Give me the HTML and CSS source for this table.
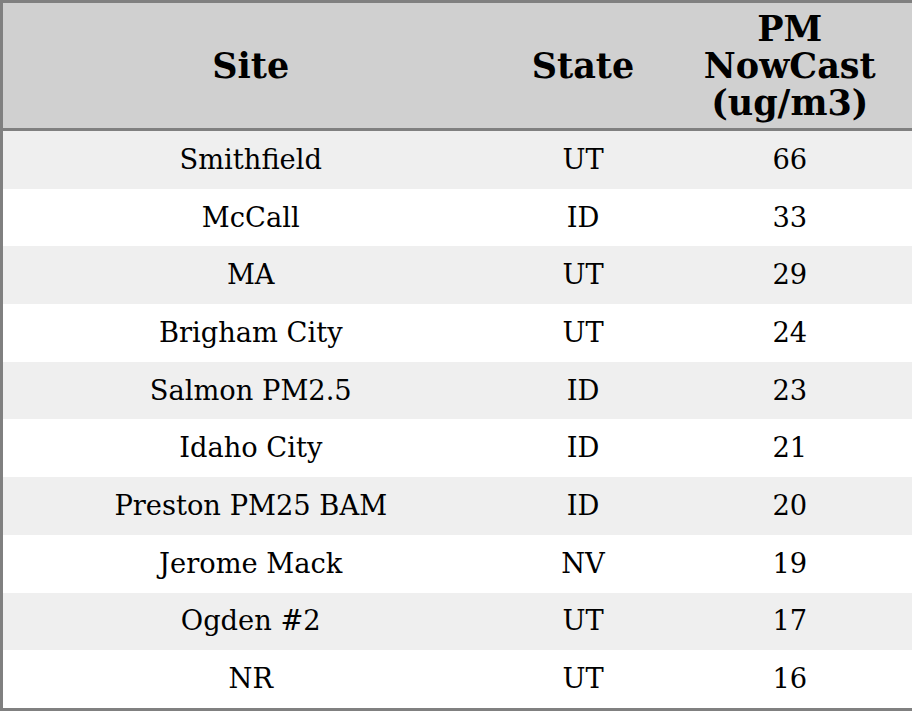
FILE: index.html
```html
<!DOCTYPE html>
<html>
<head>
<meta charset="utf-8">
<link rel="stylesheet" href="styles.css">
</head>
<body>
<table class="aq">
  <colgroup>
    <col class="c-site">
    <col class="c-state">
    <col class="c-pm">
  </colgroup>
  <thead>
    <tr><th>Site</th><th>State</th><th>PM<br>NowCast<br>(ug/m3)</th></tr>
  </thead>
  <tbody>
    <tr><td>Smithfield</td><td>UT</td><td>66</td></tr>
    <tr><td>McCall</td><td>ID</td><td>33</td></tr>
    <tr><td>MA</td><td>UT</td><td>29</td></tr>
    <tr><td>Brigham City</td><td>UT</td><td>24</td></tr>
    <tr><td>Salmon PM2.5</td><td>ID</td><td>23</td></tr>
    <tr><td>Idaho City</td><td>ID</td><td>21</td></tr>
    <tr><td>Preston PM25 BAM</td><td>ID</td><td>20</td></tr>
    <tr><td>Jerome Mack</td><td>NV</td><td>19</td></tr>
    <tr><td>Ogden #2</td><td>UT</td><td>17</td></tr>
    <tr><td>NR</td><td>UT</td><td>16</td></tr>
  </tbody>
</table>
</body>
</html>
```
FILE: styles.css
```css
html, body {
  margin: 0;
  padding: 0;
  background: #ffffff;
}
.aq {
  width: 912px;
  border-collapse: collapse;
  border: 3px solid #808080;
  font-family: "DejaVu Serif", serif;
  color: #000;
  table-layout: fixed;
}
.c-site { width: 497px; }
.c-state { width: 169px; }
.c-pm { width: 246px; }
.aq th {
  background: #d0d0d0;
  font-size: 35px;
  font-weight: bold;
  line-height: 37px;
  height: 128px;
  padding: 0;
  text-align: center;
  vertical-align: middle;
  border-bottom: 3px solid #808080;
  box-sizing: border-box;
}
.aq td {
  font-size: 27.3px;
  height: 57.7px;
  padding: 0;
  text-align: center;
  vertical-align: middle;
  line-height: 30px;
}
.aq tbody tr:nth-child(odd) td {
  background: #efefef;
}
```
